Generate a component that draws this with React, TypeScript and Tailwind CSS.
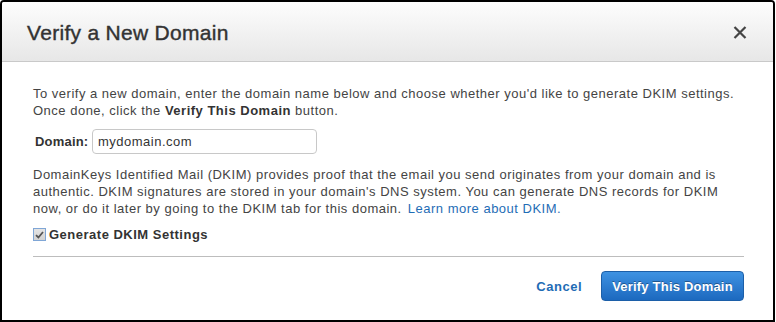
export default function App() {
  return (
    <div className="w-[776px] h-[322px] bg-white font-['Liberation_Sans',Arial,sans-serif] text-[#444]">
      <div className="w-[775px] h-[322px] border-2 border-black rounded-t-[4px] flex flex-col overflow-hidden">
        {/* header */}
        <div className="h-[60px] shrink-0 flex items-center justify-between pl-[25px] pr-[25px] bg-gradient-to-b from-[#fdfdfd] to-[#e7e7e7] border-b border-[#c9c9c9]">
          <h1 className="text-[21px] text-[#333] leading-none pt-[2px] tracking-[0.3px] [-webkit-text-stroke:0.4px_#333]">Verify a New Domain</h1>
          <button className="w-[16px] h-[16px] flex items-center justify-center mt-[2px]">
            <svg width="14" height="13" viewBox="0 0 14 13">
              <path d="M1.5 1 L12.5 12 M12.5 1 L1.5 12" stroke="#444" strokeWidth="2.2" />
            </svg>
          </button>
        </div>

        {/* body */}
        <div className="flex-1 pl-[31px] pr-[29px] pt-[23px] text-[13px] leading-[17px] tracking-[0.5px]">
          <p className="whitespace-nowrap">
            To verify a new domain, enter the domain name below and choose whether you'd like to generate DKIM settings.
            <br />
            Once done, click the <b className="text-[#333]">Verify This Domain</b> button.
          </p>

          <div className="mt-[10px] flex items-center">
            <label className="pl-[2px] font-bold text-[#333] w-[59px] tracking-[0.2px]">Domain:</label>
            <div className="w-[225px] h-[25px] border border-[#c8c8c8] rounded-[4px] flex items-center pl-[5px] text-[#333]">
              mydomain.com
            </div>
          </div>

          <p className="mt-[12px] whitespace-nowrap">
            DomainKeys Identified Mail (DKIM) provides proof that the email you send originates from your domain and is
            <br />
            authentic. DKIM signatures are stored in your domain's DNS system. You can generate DNS records for DKIM
            <br />
            now, or do it later by going to the DKIM tab for this domain.{" "}
            <a className="text-[#1f6db6] ml-[2px]">Learn more about DKIM.</a>
          </p>

          <div className="mt-[9px] flex items-center gap-[3px]">
            <span className="w-[13px] h-[13px] border border-[#7fa6d6] bg-gradient-to-b from-[#e4e4e4] to-[#d2d2d2] flex items-center justify-center">
              <svg width="9" height="8" viewBox="0 0 9 8">
                <path d="M1 4.2 L3.4 6.5 L8 1" stroke="#555" strokeWidth="1.8" fill="none" />
              </svg>
            </span>
            <span className="font-bold text-[#333]">Generate DKIM Settings</span>
          </div>

          <div className="mt-[13px] border-t border-[#bdbdbd]" />

          <div className="mt-[14px] flex items-center justify-end gap-[19px]">
            <a className="font-bold text-[#1e6cb5]">Cancel</a>
            <button className="w-[143px] h-[30px] rounded-[4px] border border-[#1c5fa8] bg-gradient-to-b from-[#3e92e2] to-[#1c69bf] text-white font-bold tracking-[0.2px] [text-shadow:0_-1px_0_rgba(0,0,0,0.35)]">
              Verify This Domain
            </button>
          </div>
        </div>
      </div>
    </div>
  );
}
